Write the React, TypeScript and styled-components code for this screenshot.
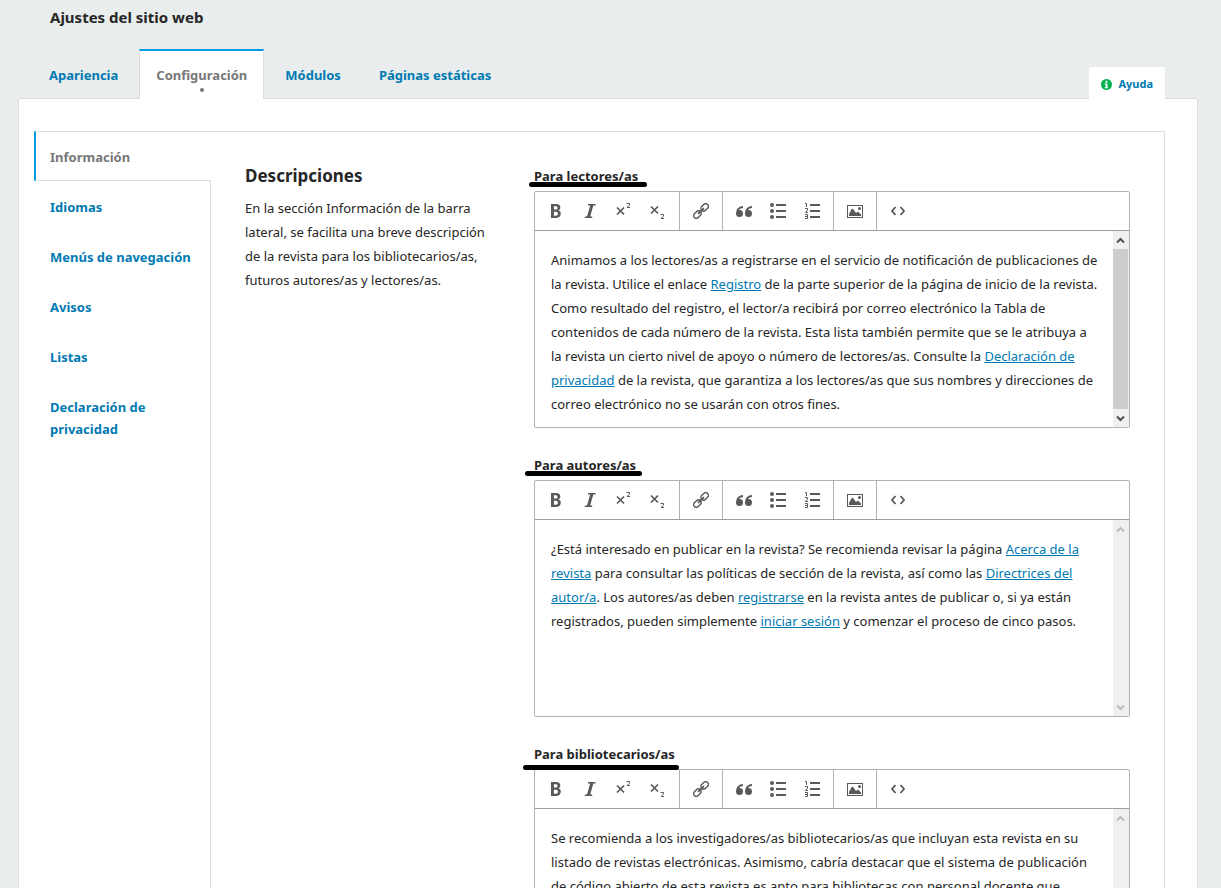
import React, { useId } from "react";
import styled, { createGlobalStyle, css } from "styled-components";

const color = {
  page: "#e9eded",
  white: "#ffffff",
  line: "#dddddd",
  edge: "#b3b3b3",
  edgeDark: "#9e9e9e",
  text: "#262626",
  muted: "#777777",
  link: "#007ab2",
  accent: "#009de5",
  icon: "#595959",
  ok: "#00b24e",
};

const GlobalStyle = createGlobalStyle`
  *, *::before, *::after { box-sizing: border-box; }
  body {
    margin: 0;
    background: ${color.page};
    color: ${color.text};
    font-family: "Noto Sans", "Open Sans", sans-serif;
    font-size: 13px;
    line-height: 24px;
  }
  button { font: inherit; border: 0; padding: 0; background: none; cursor: pointer; }
  h1, h2, p, ul { margin: 0; padding: 0; }
`;

const Page = styled.main`
  height: 100vh;
  overflow: hidden;
  padding: 6px 23px 0 18px;
`;

const Title = styled.h1`
  padding-left: 32px;
  font-size: 15px;
  line-height: 22px;
  font-weight: 700;
`;

const TabBar = styled.div`
  display: flex;
  align-items: flex-end;
  justify-content: space-between;
  margin-top: 21px;
  margin-bottom: -1px;
  padding: 0 33px 0 14px;
`;

const Tabs = styled.div`
  display: flex;
  gap: 4px;
`;

const Tab = styled.button<{ $active?: boolean }>`
  position: relative;
  height: 50px;
  padding: 0 16px 1px;
  border: 1px solid transparent;
  border-top-width: 2px;
  border-bottom: 0;
  font-weight: 700;
  line-height: 22px;
  color: ${color.link};
  ${({ $active }) =>
    $active &&
    css`
      background: ${color.white};
      color: ${color.muted};
      border-color: ${color.accent} ${color.line};
      &::after {
        content: "";
        position: absolute;
        left: 50%;
        bottom: 7px;
        width: 4px;
        height: 4px;
        margin-left: -2px;
        border-radius: 2px;
        background: ${color.muted};
      }
    `}
`;

const HelpButton = styled.button`
  display: flex;
  align-items: center;
  gap: 6px;
  height: 32px;
  padding: 2px 12px 0;
  position: relative;
  border-radius: 2px 2px 0 0;
  background: ${color.white};
  color: ${color.link};
  font-size: 11px;
  line-height: 20px;
  font-weight: 700;
`;

const Panel = styled.section`
  min-height: 1200px;
  padding: 32px 32px 0 15px;
  border: 1px solid ${color.line};
  border-radius: 2px;
  background: ${color.white};
`;

const Split = styled.div`
  display: grid;
  grid-template-columns: 177px minmax(0, 1fr);
  min-height: 1100px;
`;

const SideNav = styled.nav`
  display: flex;
  flex-direction: column;
`;

const SideCurrent = styled.button`
  padding: 14px 14px 12px;
  border: solid ${color.line};
  border-width: 1px 0 1px 2px;
  border-left-color: ${color.accent};
  color: ${color.muted};
  font-weight: 700;
  line-height: 22px;
  text-align: left;
`;

const SideRest = styled.div`
  display: flex;
  flex: 1;
  flex-direction: column;
  padding-top: 1px;
  border-right: 1px solid ${color.line};
`;

const SideItem = styled.button`
  padding: 14px 12px 14px 16px;
  color: ${color.link};
  font-weight: 700;
  line-height: 22px;
  text-align: left;
`;

const Content = styled.div`
  display: grid;
  grid-template-columns: 240px minmax(0, 1fr);
  gap: 49px;
  padding: 33px 34px 0;
  border: solid ${color.line};
  border-width: 1px 1px 0 0;
`;

const LegendTitle = styled.h2`
  font-size: 17px;
  line-height: 22px;
  font-weight: 700;
`;

const LegendText = styled.p`
  margin-top: 9px;
`;

const Fields = styled.div`
  display: flex;
  flex-direction: column;
  gap: 26px;
`;

const FieldLabel = styled.div`
  position: relative;
  margin-bottom: 4px;
  font-weight: 700;
  line-height: 22px;
`;

const PenStroke = styled.span<{ $left: number; $top: number; $width: number }>`
  position: absolute;
  left: ${({ $left }) => $left}px;
  top: ${({ $top }) => $top}px;
  width: ${({ $width }) => $width}px;
  height: 5px;
  border-radius: 3px;
  background: #000;
`;

const EditorBox = styled.div`
  border: 1px solid ${color.edge};
  border-radius: 2px;
  overflow: hidden;
`;

const Toolbar = styled.div`
  display: flex;
  height: 39px;
  border-bottom: 1px solid ${color.edgeDark};
`;

const ToolGroup = styled.div<{ $last?: boolean }>`
  display: flex;
  padding: 0 4px;
  border-right: ${({ $last }) => ($last ? "0" : `1px solid ${color.edge}`)};
`;

const ToolButton = styled.button`
  display: flex;
  width: 34px;
  align-items: center;
  justify-content: center;
  color: ${color.icon};
`;

const EditArea = styled.div`
  display: flex;
  height: 196px;
`;

const EditText = styled.div`
  flex: 1;
  min-width: 0;
  padding: 17px 0 0 16px;
  overflow: hidden;
  white-space: nowrap;
  outline: 0;
`;

const Link = styled.a`
  color: ${color.link};
`;

const ScrollTrack = styled.div`
  display: flex;
  flex-direction: column;
  justify-content: space-between;
  width: 16px;
  background: #f0f0f0;
`;

const ScrollThumb = styled.div`
  flex: 1;
  width: 15px;
  background: #cdcdcd;
`;

const ScrollButton = styled.button<{ $on?: boolean }>`
  display: flex;
  width: 15px;
  height: 18px;
  align-items: center;
  justify-content: center;
  color: ${({ $on }) => ($on ? "#505050" : "#bcbcbc")};
`;

const Svg = ({ children }: { children: React.ReactNode }) => (
  <svg width="16" height="16" viewBox="0 0 16 16" fill="currentColor" aria-hidden="true">
    {children}
  </svg>
);

const icons: Record<string, React.ReactNode> = {
  Negrita: (
    <path
      fillRule="evenodd"
      d="M3 1h5.200c2.700 0 4.100 1.200 4.100 3.500 0 1.500-.7 2.500-1.900 2.900 1.600.4 2.400 1.500 2.400 3.200 0 2.800-1.700 4.400-4.500 4.400H3zM5.900 3.200v3.400h1.900c1.100 0 1.700-.6 1.700-1.700s-.6-1.700-1.800-1.700zM5.900 8.700v4h2.100c1.300 0 1.900-.7 1.900-2s-.7-2-2-2z"
    />
  ),
  Cursiva: <path d="M6 1h7.500v1.400H11.300L8.200 13.600H10.200V15H2.800v-1.400H5L8.200 2.400H6z" />,
  Superíndice: (
    <>
      <path d="M1 4.500l7 7M8 4.500l-7 7" stroke="currentColor" strokeWidth="1.700" fill="none" />
      <path d="M10.500 .5h3v1.700L11 4.500h3" stroke="currentColor" fill="none" />
    </>
  ),
  Subíndice: (
    <>
      <path d="M1 3.500l7 7M8 3.500l-7 7" stroke="currentColor" strokeWidth="1.700" fill="none" />
      <path d="M10.500 11.500h3v1.700L11 15.500h3" stroke="currentColor" fill="none" />
    </>
  ),
  Enlace: (
    <g fill="none" stroke="currentColor" strokeWidth="1.400" transform="rotate(-45 8 8)">
      <rect x="-1.300" y="5.300" width="8.300" height="5.400" rx="2.700" />
      <rect x="9" y="5.300" width="8.300" height="5.400" rx="2.700" />
      <path d="M4.500 8h7" strokeWidth="1.800" strokeLinecap="round" />
    </g>
  ),
  Cita: (
    <path d="M3.500 7a3.500 3.500 0 1 1-3.500 3.500L0 10a7 7 0 0 1 7-7v2a5 5 0 0 0-4.100 2.100L3.500 7zm9 0a3.500 3.500 0 1 1-3.500 3.500V10a7 7 0 0 1 7-7v2a5 5 0 0 0-4.100 2.100z" />
  ),
  Viñetas: (
    <path d="M6 1h10v2H6zM6 7h10v2H6zM6 13h10v2H6zM0 2a2 2 0 1 1 4 0 2 2 0 1 1-4 0M0 8a2 2 0 1 1 4 0 2 2 0 1 1-4 0M0 14a2 2 0 1 1 4 0 2 2 0 1 1-4 0" />
  ),
  Numeración: (
    <>
      <path d="M6 1h10v2H6zM6 7h10v2H6zM6 13h10v2H6z" />
      <path
        d="M1 .5h1.500V4M1 5.500h2.500v1.500L1.500 9.500h2.500M1 11.500h2.500v4H1M1 13.500h2.500"
        stroke="currentColor"
        fill="none"
      />
    </>
  ),
  Imagen: (
    <path
      fillRule="evenodd"
      d="M0 2h16v13H0zM1 3v11h14V3zM11 5.500a1.500 1.500 0 1 0 3 0 1.500 1.500 0 1 0-3 0M2 13V11l3-5.500 1.500 1 2.500 3.500 2-1.500L14 11.500V13z"
      clipRule="evenodd"
    />
  ),
  "Código fuente": (
    <path d="M5.500 4L2 8l3.500 4M10.500 4L14 8l-3.500 4" fill="none" stroke="currentColor" strokeWidth="1.800" />
  ),
};

const toolGroups = [
  ["Negrita", "Cursiva", "Superíndice", "Subíndice"],
  ["Enlace"],
  ["Cita", "Viñetas", "Numeración"],
  ["Imagen"],
  ["Código fuente"],
];

const Arrow = ({ up }: { up?: boolean }) => (
  <svg width="9" height="7" viewBox="0 0 9 7" aria-hidden="true">
    <path
      d={up ? "M1 5.500l3.500-3.500L8 5.500" : "M1 1.500l3.500 3.500L8 1.500"}
      fill="none"
      stroke="currentColor"
      strokeWidth="2"
    />
  </svg>
);

type EditorProps = {
  label: string;
  stroke: { left: number; top: number; width: number };
  scrollable?: boolean;
  lines: React.ReactNode[];
};

const Editor = ({ label, stroke, scrollable, lines }: EditorProps) => {
  const id = useId();
  return (
    <div>
      <FieldLabel>
        <span id={id}>{label}</span>
        <PenStroke $left={stroke.left} $top={stroke.top} $width={stroke.width} />
      </FieldLabel>
      <EditorBox>
        <Toolbar role="toolbar">
          {toolGroups.map((group, i) => (
            <ToolGroup key={group[0]} $last={i === toolGroups.length - 1}>
              {group.map((name) => (
                <ToolButton key={name} type="button" aria-label={name}>
                  <Svg>{icons[name]}</Svg>
                </ToolButton>
              ))}
            </ToolGroup>
          ))}
        </Toolbar>
        <EditArea>
          <EditText
            role="textbox"
            aria-multiline="true"
            aria-labelledby={id}
            contentEditable
            suppressContentEditableWarning
          >
            <p>
              {lines.map((line, i) => (
                <React.Fragment key={i}>
                  {line}
                  {i < lines.length - 1 && <br />}
                </React.Fragment>
              ))}
            </p>
          </EditText>
          <ScrollTrack>
            <ScrollButton type="button" aria-label="Subir" $on={scrollable}>
              <Arrow up />
            </ScrollButton>
            {scrollable && <ScrollThumb />}
            <ScrollButton type="button" aria-label="Bajar" $on={scrollable}>
              <Arrow />
            </ScrollButton>
          </ScrollTrack>
        </EditArea>
      </EditorBox>
    </div>
  );
};

export default function App() {
  return (
    <>
      <GlobalStyle />
      <Page>
        <Title>Ajustes del sitio web</Title>
        <TabBar>
          <Tabs role="tablist">
            <Tab role="tab">Apariencia</Tab>
            <Tab role="tab" aria-selected="true" $active>
              Configuración
            </Tab>
            <Tab role="tab">Módulos</Tab>
            <Tab role="tab">Páginas estáticas</Tab>
          </Tabs>
          <HelpButton type="button">
            <svg width="11" height="11" viewBox="0 0 12 12" aria-hidden="true">
              <circle cx="6" cy="6" r="6" fill={color.ok} />
              <path d="M5 2h2v2H5zM4 5h3v4h1v1H4V9h1V6H4z" fill="#fff" />
            </svg>
            Ayuda
          </HelpButton>
        </TabBar>
        <Panel>
          <Split>
            <SideNav>
              <SideCurrent type="button">Información</SideCurrent>
              <SideRest>
                <SideItem type="button">Idiomas</SideItem>
                <SideItem type="button">Menús de navegación</SideItem>
                <SideItem type="button">Avisos</SideItem>
                <SideItem type="button">Listas</SideItem>
                <SideItem type="button">Declaración de privacidad</SideItem>
              </SideRest>
            </SideNav>
            <Content>
              <div>
                <LegendTitle>Descripciones</LegendTitle>
                <LegendText>
                  En la sección Información de la barra lateral, se facilita una breve descripción de la
                  revista para los bibliotecarios/as, futuros autores/as y lectores/as.
                </LegendText>
              </div>
              <Fields>
                <Editor
                  label="Para lectores/as"
                  stroke={{ left: -5, top: 17, width: 118 }}
                  scrollable
                  lines={[
                    "Animamos a los lectores/as a registrarse en el servicio de notificación de publicaciones de",
                    <>
                      la revista. Utilice el enlace <Link href="#registro">Registro</Link> de la parte superior de la
                      página de inicio de la revista.
                    </>,
                    "Como resultado del registro, el lector/a recibirá por correo electrónico la Tabla de",
                    "contenidos de cada número de la revista. Esta lista también permite que se le atribuya a",
                    <>
                      la revista un cierto nivel de apoyo o número de lectores/as. Consulte la{" "}
                      <Link href="#privacidad">Declaración de</Link>
                    </>,
                    <>
                      <Link href="#privacidad">privacidad</Link> de la revista, que garantiza a los lectores/as que sus
                      nombres y direcciones de
                    </>,
                    "correo electrónico no se usarán con otros fines.",
                  ]}
                />
                <Editor
                  label="Para autores/as"
                  stroke={{ left: -9, top: 17, width: 117 }}
                  lines={[
                    <>
                      ¿Está interesado en publicar en la revista? Se recomienda revisar la página{" "}
                      <Link href="#acerca">Acerca de la</Link>
                    </>,
                    <>
                      <Link href="#acerca">revista</Link> para consultar las políticas de sección de la revista, así
                      como las <Link href="#directrices">Directrices del</Link>
                    </>,
                    <>
                      <Link href="#directrices">autor/a</Link>. Los autores/as deben{" "}
                      <Link href="#registro">registrarse</Link> en la revista antes de publicar o, si ya están
                    </>,
                    <>
                      registrados, pueden simplemente <Link href="#sesion">iniciar sesión</Link> y comenzar el proceso
                      de cinco pasos.
                    </>,
                  ]}
                />
                <Editor
                  label="Para bibliotecarios/as"
                  stroke={{ left: -11, top: 22, width: 156 }}
                  lines={[
                    "Se recomienda a los investigadores/as bibliotecarios/as que incluyan esta revista en su",
                    "listado de revistas electrónicas. Asimismo, cabría destacar que el sistema de publicación",
                    "de código abierto de esta revista es apto para bibliotecas con personal docente que",
                  ]}
                />
              </Fields>
            </Content>
          </Split>
        </Panel>
      </Page>
    </>
  );
}
